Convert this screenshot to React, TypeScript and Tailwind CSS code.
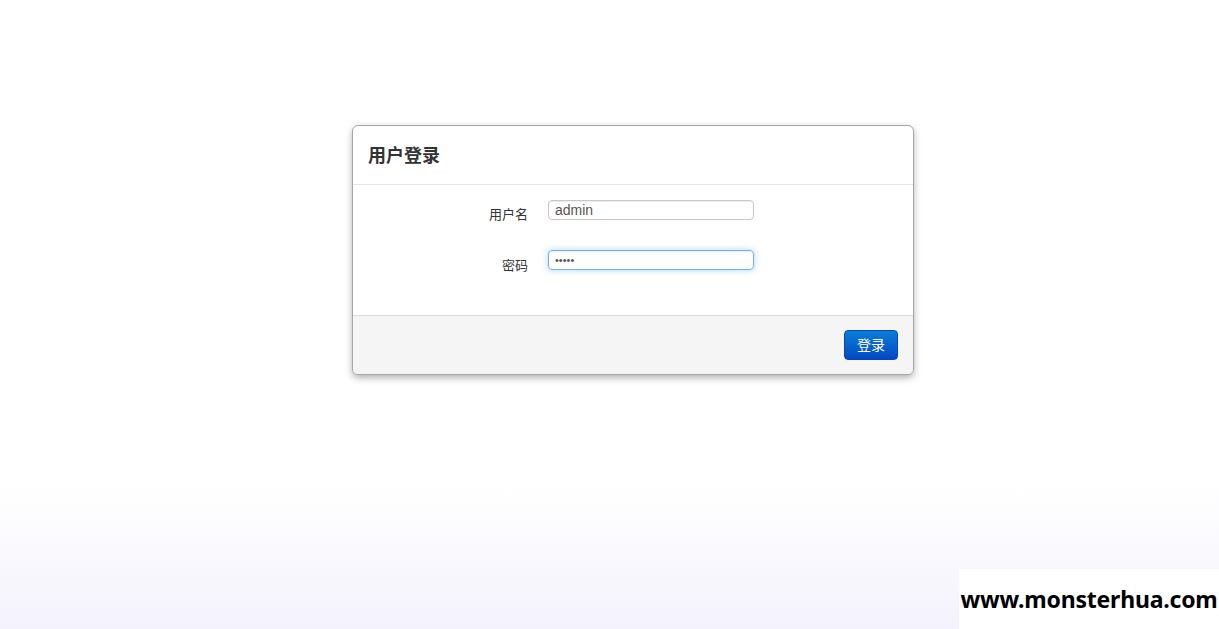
const App = () => {
  return (
    <div className="h-[629px] w-full flex flex-col bg-[linear-gradient(to_bottom,#ffffff_0%,#ffffff_77%,#f4f2fc_100%)] font-['Liberation_Sans','Noto_Sans_CJK_SC',sans-serif] text-[#333]">
      <div className="mt-[125px] ml-[352px] w-[562px] bg-white border border-[#a6a6a6] rounded-[6px] shadow-[0_3px_7px_rgba(0,0,0,0.3)] overflow-hidden">
        <div className="h-[59px] px-[15px] flex items-center border-b border-[#e5e5e5]">
          <h3 className="text-[18px] font-bold text-[#333] leading-none pt-[1px]">用户登录</h3>
        </div>

        <div className="h-[130px] px-[15px] pt-[15px] flex flex-col gap-[30px]">
          <div className="flex h-[20px]">
            <label className="w-[160px] text-right text-[13px] leading-[20px] pt-[5px]">用户名</label>
            <input
              type="text"
              defaultValue="admin"
              className="ml-[20px] w-[206px] h-[20px] px-[6px] border border-[#c8c8c8] rounded-[4px] text-[14px] text-[#555] leading-[18px] outline-none shadow-[inset_0_1px_1px_rgba(0,0,0,0.075)]"
            />
          </div>
          <div className="flex h-[20px]">
            <label className="w-[160px] text-right text-[13px] leading-[20px] pt-[6px]">密码</label>
            <input
              type="password"
              defaultValue="admin"
              className="ml-[20px] w-[206px] h-[20px] px-[6px] border border-[#6fb3ea] rounded-[4px] text-[11px] text-[#555] outline-none shadow-[inset_0_1px_1px_rgba(0,0,0,0.075),0_0_6px_rgba(82,168,236,0.5)]"
            />
          </div>
        </div>

        <div className="h-[59px] border-t border-[#dcdcdc] bg-[#f5f5f5] flex justify-end items-start pt-[14px] pr-[15px]">
          <button className="w-[54px] h-[30px] rounded-[4px] border border-[#0848b0] bg-[linear-gradient(to_bottom,#0a7dd6,#0449c4)] text-white text-[14px] leading-none">
            登录
          </button>
        </div>
      </div>

      <div className="mt-auto self-end w-[260px] h-[60px] bg-white flex items-center justify-center">
        <span className="font-['Noto_Sans',sans-serif] font-bold text-[23px] text-black tracking-[-0.2px]">www.monsterhua.com</span>
      </div>
    </div>
  );
};

export default App;
